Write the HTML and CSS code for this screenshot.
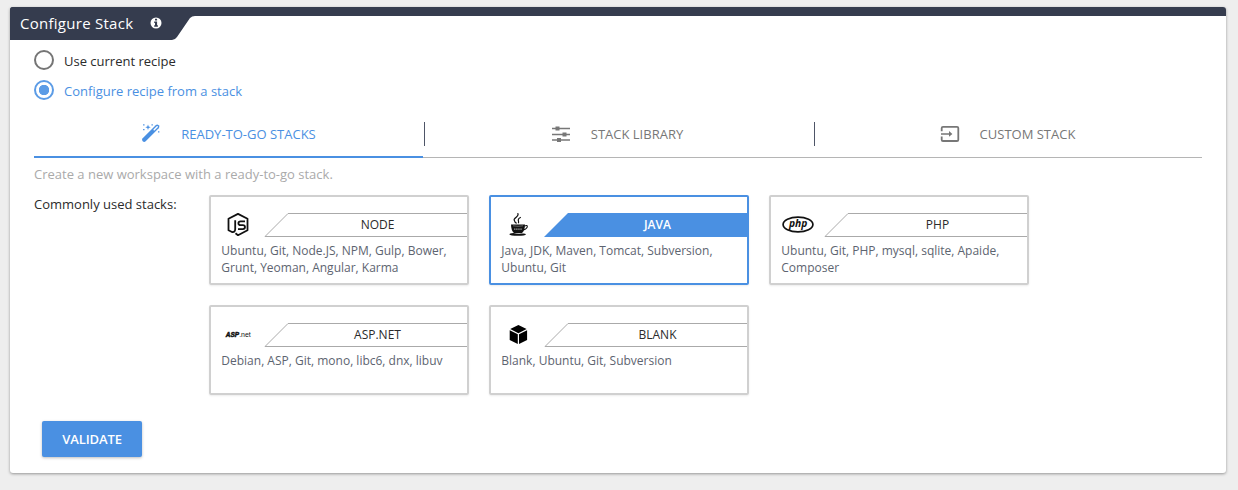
FILE: index.html
```html
<!DOCTYPE html>
<html lang="en">
<head>
<meta charset="utf-8">
<title>Configure Stack</title>
<link rel="stylesheet" href="styles.css">
</head>
<body>
<section class="panel">
  <header class="panel-header">
    <svg class="header-shape" width="200" height="33" viewBox="0 0 200 33"><path d="M0 0H200V9H185Q182 9 180 11L167 30Q165 33 162 33H0Z" fill="#353c4e"/></svg>
    <h1 class="panel-title">Configure Stack</h1>
    <svg class="info" width="12" height="12" viewBox="0 0 12 12"><circle cx="6" cy="6" r="5.5" fill="#fff"/><path d="M5 1.8h2.1v1.7H5zM4.2 4.6h2.9v3.7h.8v1.4H4.2V8.3H5V6h-.8z" fill="#353c4e"/></svg>
  </header>
  <div class="content">
    <div class="radio"><span class="dot"></span><span>Use current recipe</span></div>
    <div class="radio checked"><span class="dot"></span><span>Configure recipe from a stack</span></div>
    <nav class="tabs">
      <div class="tab active">
        <svg class="tab-icon" width="20" height="20" viewBox="0 0 20 20"><path d="M3.2 16.8 16.2 3.8" stroke="#4a90e2" stroke-width="4.2" stroke-linecap="round"/><path d="M13.2 6.8 16.2 3.8" stroke="#fff" stroke-width="1.5" stroke-linecap="round"/><path d="M7 1.6l.7 2 2 .7-2 .7-.7 2-.7-2-2-.7 2-.7zM2.1 1.3h1.4v1.3H2.1zM2.1 6h1.4v1.3H2.1zM10.5 1.3h1.3v1.3h-1.3zM17 8.2h1.4v1.4H17z" fill="#4a90e2"/></svg>
        <span>READY-TO-GO STACKS</span>
      </div>
      <div class="tab">
        <svg class="tab-icon" width="20" height="20" viewBox="0 0 20 20"><path d="M1 4.5H19M1 10.5H19M1 16H19" stroke="#777" stroke-width="1.3"/><path d="M4.5 2.5h4v4h-4zM11.5 8.5h4v4h-4zM6 14h4v4H6z" fill="#777"/></svg>
        <span>STACK LIBRARY</span>
      </div>
      <div class="tab">
        <svg class="tab-icon" width="20" height="20" viewBox="0 0 20 20"><path d="M1.7 7.2V4Q1.7 2.8 3 2.8H17Q18.3 2.8 18.3 4V15.7Q18.3 17 17 17H3Q1.7 17 1.7 15.7V12.5" fill="none" stroke="#777" stroke-width="1.8"/><path d="M1 9.2H9V7l3.4 3L9 12.8v-2.1H1z" fill="#777"/></svg>
        <span>CUSTOM STACK</span>
      </div>
    </nav>
    <p class="hint">Create a new workspace with a ready-to-go stack.</p>
    <div class="stacks">
      <span class="stacks-label">Commonly used stacks:</span>
      <div class="grid">
        <article class="card">
          <div class="card-head">
            <svg class="logo" width="34" height="24" viewBox="0 0 34 24"><path d="M14.5 20.3 17 22.2 26.5 17.2V5.8L17 .9 7.5 5.8V17.2L11 19Q14.2 19.5 14.2 16V7.2M24 8.3H19.7Q17.4 8.3 17.4 10.2T19.7 12.1H21.8Q24 12.1 24 14.1T21.8 16.1H17" fill="none" stroke="#111" stroke-width="1.8" stroke-linejoin="round"/></svg>
            <div class="ribbon"><svg class="ribbon-shape" width="203" height="24" viewBox="0 0 203 24"><path class="edge" d="M203 .5H24L1 23.5H203"/></svg><span class="name">NODE</span></div>
          </div>
          <p class="desc">Ubuntu, Git, Node.JS, NPM, Gulp, Bower, Grunt, Yeoman, Angular, Karma</p>
        </article>
        <article class="card selected">
          <div class="card-head">
            <svg class="logo" width="34" height="24" viewBox="0 0 34 24"><path d="M16.6 .2Q18 2.2 15.2 4.3T13.4 7.5Q13.6 9.3 15.6 10.4M19.8 4.3Q16.8 5.8 17.3 7.4T17.4 10.3" fill="none" stroke="#111" stroke-width="1.2"/><path d="M10 11.5H24Q24 17.5 20.8 20.2H13.2Q10 17.5 10 11.5Z" fill="#111"/><path d="M23.5 13Q26.5 11.8 26.3 13.7T22.5 16.9" fill="none" stroke="#111" stroke-width="1.1"/><path d="M12 12.8Q17 13.8 22 12.8" fill="none" stroke="#888" stroke-width=".7"/><path d="M13 16.2H21.2" stroke="#999" stroke-width="1.2" stroke-dasharray="1.5 .6"/><path d="M12.5 19.9Q8.3 20.4 8.3 21.3 9.3 22.8 16.8 22.8T25 21.3Q24.5 20.4 21.8 20.5Q17 21.5 12.5 19.9Z" fill="#111"/></svg>
            <div class="ribbon"><svg class="ribbon-shape" width="203" height="24" viewBox="0 0 203 24"><path d="M203 0H24L0 24H203Z" fill="#4a90e2"/></svg><span class="name">JAVA</span></div>
          </div>
          <p class="desc">Java, JDK, Maven, Tomcat, Subversion, Ubuntu, Git</p>
        </article>
        <article class="card">
          <div class="card-head">
            <svg class="logo" width="34" height="24" viewBox="0 0 34 24"><ellipse cx="17" cy="11.5" rx="14.9" ry="7.4" fill="none" stroke="#111" stroke-width="1.7"/><text x="17.2" y="14.1" class="php" text-anchor="middle" textLength="18.5" lengthAdjust="spacingAndGlyphs">php</text></svg>
            <div class="ribbon"><svg class="ribbon-shape" width="203" height="24" viewBox="0 0 203 24"><path class="edge" d="M203 .5H24L1 23.5H203"/></svg><span class="name">PHP</span></div>
          </div>
          <p class="desc">Ubuntu, Git, PHP, mysql, sqlite, Apaide, Composer</p>
        </article>
        <article class="card">
          <div class="card-head">
            <svg class="logo" width="34" height="24" viewBox="0 0 34 24"><text x="4.8" y="14.3" textLength="25" lengthAdjust="spacingAndGlyphs"><tspan class="asp">ASP</tspan><tspan class="net">.net</tspan></text></svg>
            <div class="ribbon"><svg class="ribbon-shape" width="203" height="24" viewBox="0 0 203 24"><path class="edge" d="M203 .5H24L1 23.5H203"/></svg><span class="name">ASP.NET</span></div>
          </div>
          <p class="desc">Debian, ASP, Git, mono, libc6, dnx, libuv</p>
        </article>
        <article class="card">
          <div class="card-head">
            <svg class="logo" width="34" height="24" viewBox="0 0 34 24"><path d="M17.4 2 25.6 6 17.4 10.2 9.2 6ZM8.7 7.3 16.8 11.3V21L8.7 17ZM26.1 7.3 18 11.3V21L26.1 17Z" fill="#000"/></svg>
            <div class="ribbon"><svg class="ribbon-shape" width="203" height="24" viewBox="0 0 203 24"><path class="edge" d="M203 .5H24L1 23.5H203"/></svg><span class="name">BLANK</span></div>
          </div>
          <p class="desc">Blank, Ubuntu, Git, Subversion</p>
        </article>
      </div>
    </div>
    <button class="validate">VALIDATE</button>
  </div>
</section>
</body>
</html>
```
FILE: styles.css
```css
* { box-sizing: border-box; }
body {
  margin: 0;
  padding: 7px 12px 17px 10px;
  height: 490px;
  background: #eee;
  font-family: "Open Sans", sans-serif;
  font-size: 13px;
  color: #2b2b2b;
  overflow: hidden;
}
h1, p { margin: 0; font-weight: 400; }
svg { display: block; flex: none; }
.panel {
  height: 466px;
  background: #fff;
  border-radius: 3px;
  box-shadow: 0 1px 3px rgba(0, 0, 0, .38);
}
.panel-header {
  position: relative;
  display: flex;
  height: 33px;
  padding-left: 10px;
  border-radius: 3px 3px 0 0;
  background: linear-gradient(#353c4e 9px, transparent 9px);
  overflow: hidden;
}
.header-shape { position: absolute; left: 0; top: 0; }
.panel-title {
  position: relative;
  width: 130px;
  font-size: 15px;
  line-height: 33px;
  letter-spacing: .27px;
  color: #fff;
}
.info { position: relative; margin-top: 10px; }
.content { padding: 5px 24px 0; }
.radio {
  display: flex;
  align-items: center;
  gap: 10px;
  height: 30px;
}
.dot {
  display: flex;
  width: 20px;
  height: 20px;
  border: 2px solid #757575;
  border-radius: 50%;
}
.radio.checked { color: #4a90e2; }
.checked .dot {
  border-color: #5c9ce6;
  background: radial-gradient(circle, #5c9ce6 4.9px, transparent 5.5px);
}
.radio > span:last-child { padding-top: 2px; }
.tabs {
  display: grid;
  grid-template-columns: 389px 390px 389px;
  height: 53px;
  border-bottom: 1px solid #b5b5b5;
}
.tab {
  display: flex;
  justify-content: center;
  align-items: center;
  height: 53px;
  gap: 20px;
  padding: 5px 2px 0 0;
  color: #777;
  background: linear-gradient(#4e5567, #4e5567) 1px 17px / 1px 24px no-repeat;
}
.tab:last-child { padding-right: 0; }
.tab.active {
  padding: 7px 0 0;
  color: #4a90e2;
  background: none;
  border-bottom: 2px solid #4a90e2;
}
.tab.active .tab-icon { margin-top: -2px; }
.hint { margin-top: 7px; line-height: 18px; color: #aaa; }
.stacks { display: flex; margin-top: 12px; }
.stacks-label { width: 175px; line-height: 18px; }
.grid {
  display: grid;
  grid-template-columns: repeat(3, 260px);
  grid-auto-rows: 90px;
  gap: 20px;
}
.card {
  padding: 16px 0 0 10px;
  border: 2px solid #d0d0d0;
  border-radius: 2px;
  box-shadow: 0 1px 2px rgba(0, 0, 0, .08);
}
.card.selected { border-color: #4a90e2; }
.card-head { display: flex; justify-content: space-between; }
.ribbon { position: relative; width: 203px; height: 24px; }
.ribbon-shape { position: absolute; left: 0; top: 0; }
.edge { fill: none; stroke: #aaa; stroke-width: 1; }
.name {
  position: relative;
  display: block;
  padding-left: 24px;
  text-align: center;
  font-size: 12px;
  line-height: 24px;
}
.selected .name { color: #fff; font-weight: 600; }
.desc { padding: 5px 10px 0 .3px; font-size: 12px; line-height: 17px; color: #5d6470; }
.php { font: italic 700 10px "Open Sans", sans-serif; fill: #111; }
.asp { font: italic 900 7.5px "Liberation Sans", sans-serif; fill: #111; stroke: #111; stroke-width: .5px; }
.net { font: 8px "Liberation Sans", sans-serif; fill: #111; }
.validate {
  display: block;
  width: 100px;
  height: 36px;
  margin: 26px 0 0 8px;
  padding: 0;
  border: 0;
  border-radius: 2px;
  background: #4a90e2;
  box-shadow: 0 1px 3px rgba(0, 0, 0, .26);
  color: #fff;
  font: 600 13px "Open Sans", sans-serif;
  letter-spacing: -.1px;
}
```
